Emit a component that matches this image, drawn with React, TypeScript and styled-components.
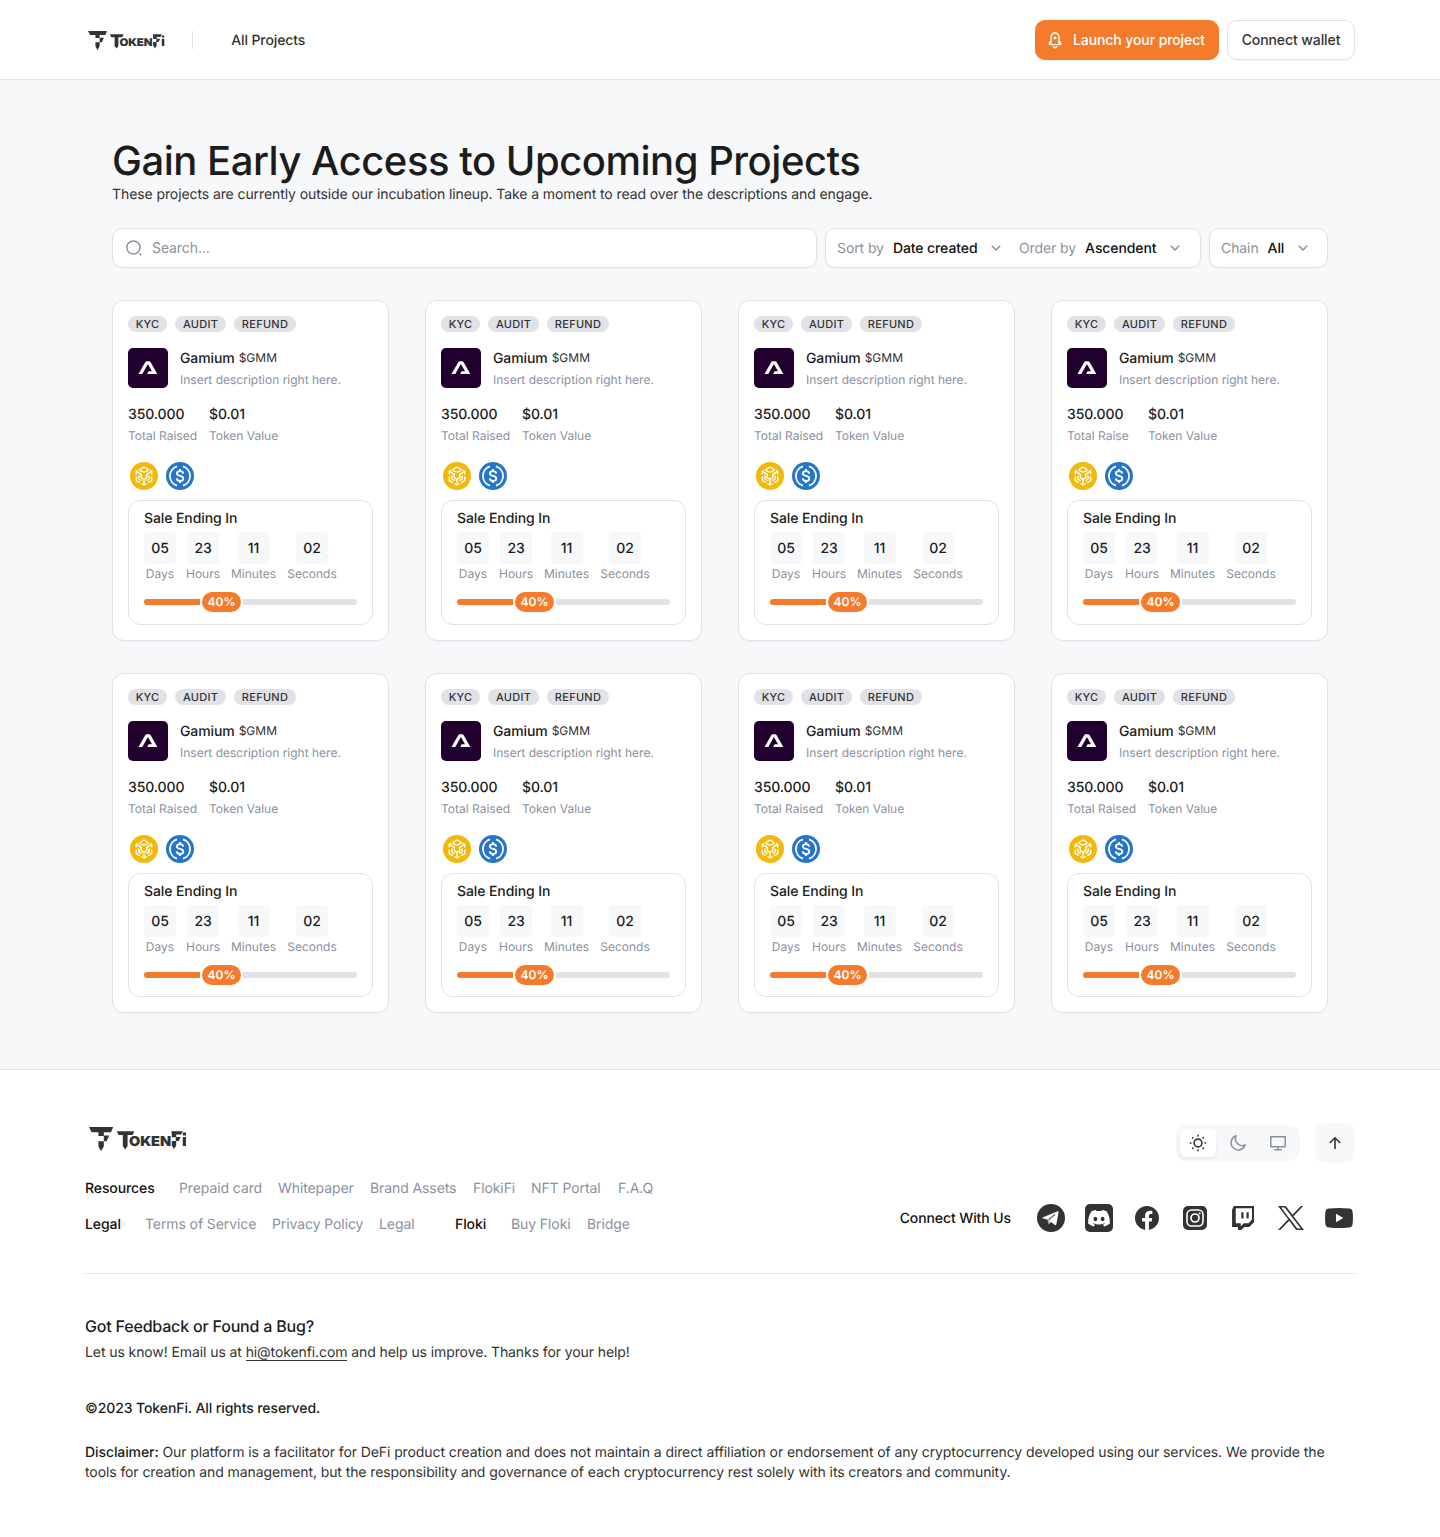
import React from "react";
import styled, { createGlobalStyle } from "styled-components";
import { FaDiscord } from "react-icons/fa6";

const GlobalStyle = createGlobalStyle`
  *, *::before, *::after { box-sizing: border-box; }
  body { margin: 0; background: #fff; text-rendering: geometricPrecision; }
  body, input, button { font-family: Inter, "Liberation Sans", sans-serif; }
`;

const c = {
  ink: "#1c1c1c",
  text: "#333333",
  muted: "#8b90a0",
  line: "#e1e2e8",
  surface: "#f7f8fa",
  orange: "#f47b2b",
};

const Page = styled.div`
  width: 1440px;
  min-height: 1537px;
  display: flex;
  flex-direction: column;
  font-size: 14px;
  line-height: 20px;
  letter-spacing: -0.094px;
  color: ${c.text};
`;

const Header = styled.header`
  height: 80px;
  padding: 0 85px;
  border-bottom: 1px solid ${c.line};
  display: flex;
  align-items: center;
  justify-content: space-between;
`;

const HeaderGroup = styled.div<{ $gap?: number }>`
  display: flex;
  align-items: center;
  gap: ${(p) => p.$gap ?? 0}px;
`;

const LogoBox = styled.div<{ $scale: number }>`
  display: flex;
  padding-left: ${(p) => (p.$scale < 1 ? 3 : 4)}px;
  padding-top: ${(p) => (p.$scale < 1 ? 1 : 0)}px;
  svg {
    width: ${(p) => 98 * p.$scale}px;
    height: ${(p) => 24 * p.$scale}px;
    overflow: visible;
  }
`;

const Separator = styled.span`
  width: 1px;
  height: 18px;
  margin: 0 38px 0 27px;
  background: ${c.line};
`;

const NavLink = styled.a`
  padding-top: 2px;
  font-weight: 500;
`;

const Button = styled.button<{ $primary?: boolean }>`
  height: 40px;
  width: ${(p) => (p.$primary ? 184 : 128)}px;
  padding: 0 0 0 ${(p) => (p.$primary ? 9 : 0)}px;
  display: flex;
  align-items: center;
  justify-content: ${(p) => (p.$primary ? "flex-start" : "center")};
  gap: 8px;
  border-radius: 10px;
  border: 1px solid ${(p) => (p.$primary ? c.orange : c.line)};
  background: ${(p) => (p.$primary ? c.orange : "#fff")};
  color: ${(p) => (p.$primary ? "#fff" : c.text)};
  font-size: 14px;
  font-weight: 500;
  letter-spacing: -0.094px;
  box-shadow: 0 1px 2px rgba(20, 20, 43, 0.04);
`;

const Main = styled.main`
  height: 990px;
  padding: 57px 112px 0;
  background: ${c.surface};
  border-bottom: 1px solid ${c.line};
`;

const Title = styled.h1`
  margin: 0;
  font-size: 40px;
  line-height: 47px;
  font-weight: 500;
  letter-spacing: -0.48px;
  color: ${c.ink};
`;

const Subtitle = styled.p`
  margin: 0;
  padding-top: 1px;
`;

const Toolbar = styled.div`
  display: flex;
  gap: 8px;
  margin: 23px 0 32px;
`;

const Field = styled.div<{ $width?: number }>`
  height: 40px;
  ${(p) => (p.$width ? `width: ${p.$width}px;` : "flex: 1;")}
  display: flex;
  align-items: center;
  padding: 0 11px;
  background: #fff;
  border: 1px solid ${c.line};
  border-radius: 10px;
  box-shadow: 0 1px 2px rgba(20, 20, 43, 0.03);
`;

const SearchInput = styled.input`
  flex: 1;
  height: 20px;
  line-height: 20px;
  border: 0;
  outline: 0;
  padding: 0 0 1px;
  margin-left: 8px;
  font-size: 14px;
  letter-spacing: -0.094px;
  background: transparent;
  &::placeholder { color: ${c.muted}; opacity: 1; }
`;

const Select = styled.div<{ $width?: number }>`
  display: flex;
  align-items: center;
  white-space: nowrap;
  ${(p) => (p.$width ? `width: ${p.$width}px;` : "")}
  span, b { padding-top: 2px; }
  span { color: ${c.muted}; margin-right: 9px; }
  b { color: #111; font-weight: 500; margin-right: 8.500px; }
`;

const Grid = styled.div`
  display: grid;
  grid-template-columns: repeat(4, 277px);
  column-gap: 36px;
  row-gap: 32px;
`;

const Card = styled.article`
  height: 340.6px;
  padding: 15px;
  background: #fff;
  border: 1px solid ${c.line};
  border-radius: 12px;
  box-shadow: 0 1px 2px rgba(20, 20, 43, 0.03);
`;

const Tags = styled.div`
  display: flex;
  gap: 8px;
`;

const Tag = styled.span<{ $width: number }>`
  width: ${(p) => p.$width}px;
  height: 16px;
  border-radius: 8px;
  background: ${c.line};
  font-size: 11px;
  line-height: 16px;
  font-weight: 500;
  letter-spacing: 0.280px;
  text-align: center;
`;

const Project = styled.div`
  display: flex;
  gap: 12px;
  height: 40px;
  margin: 16px 0;
`;

const ProjectLogo = styled.div`
  width: 40px;
  height: 40px;
  border-radius: 5px;
  background: #21002f;
  svg { display: block; }
`;

const ProjectName = styled.div`
  display: flex;
  gap: 4px;
  height: 20px;
  line-height: 22px;
  color: ${c.ink};
  font-weight: 500;
  small { font-size: 12px; line-height: 20px; font-weight: 400; color: ${c.text}; letter-spacing: 0; }
`;

const Small = styled.div`
  margin-top: 2px;
  font-size: 12px;
  line-height: 20px;
  letter-spacing: 0;
  color: ${c.muted};
  white-space: nowrap;
`;

const Stats = styled.div`
  display: flex;
  gap: 12px;
`;

const Stat = styled.div`
  width: 69px;
`;

const Value = styled.div`
  height: 20px;
  line-height: 22px;
  color: ${c.ink};
  font-weight: 500;
`;

const Coins = styled.div`
  display: flex;
  gap: 8px;
  height: 28px;
  margin: 16px 0 10px 2px;
`;

const Sale = styled.section`
  height: 124.6px;
  padding: 7px 15px;
  border: 1px solid ${c.line};
  border-radius: 12px;
`;

const Countdown = styled.div`
  display: grid;
  grid-template-columns: 32px 34px 47px 50px;
  column-gap: 10px;
  height: 52px;
  margin: 4px 0 8px;
`;

const Unit = styled.div`
  display: flex;
  flex-direction: column;
  align-items: center;
  div { margin-top: 0; }
`;

const Digits = styled.span`
  width: 32px;
  height: 32px;
  border-radius: 4px;
  background: ${c.surface};
  color: ${c.ink};
  font-weight: 500;
  line-height: 34px;
  text-align: center;
`;

const Progress = styled.div`
  height: 20px;
  display: flex;
  align-items: center;
`;

const Bar = styled.span<{ $done?: boolean }>`
  height: 6px;
  ${(p) => (p.$done ? "width: 56px;" : "flex: 1;")}
  background: ${(p) => (p.$done ? c.orange : c.line)};
  border-radius: ${(p) => (p.$done ? "3px 0 0 3px" : "0 3px 3px 0")};
`;

const Percent = styled.span`
  width: 39px;
  height: 20px;
  margin: 0 2px;
  border-radius: 10px;
  background: ${c.orange};
  color: #fff;
  font-size: 12px;
  font-weight: 600;
  letter-spacing: 0;
  text-align: center;
`;

const Footer = styled.footer`
  padding: 53px 85px 0;
`;

const FooterTop = styled.div`
  display: flex;
  justify-content: space-between;
  height: 151px;
  border-bottom: 1px solid ${c.line};
`;

const FooterLinks = styled.div`
  padding-top: 4px;
`;

const LinkRow = styled.div<{ $top: number }>`
  display: flex;
  margin-top: ${(p) => p.$top}px;
  white-space: nowrap;
`;

const FooterLink = styled.a<{ $width: number; $head?: boolean }>`
  width: ${(p) => p.$width}px;
  color: ${(p) => (p.$head ? "#111" : c.muted)};
  font-weight: ${(p) => (p.$head ? 500 : 400)};
`;

const FooterSide = styled.div`
  display: flex;
  flex-direction: column;
  align-items: flex-end;
`;

const Controls = styled.div`
  display: flex;
  align-items: center;
  gap: 15px;
`;

const ThemeSwitch = styled.div`
  display: flex;
  gap: 4px;
  padding: 4px;
  border-radius: 10px;
  background: ${c.surface};
`;

const ThemeOption = styled.button<{ $active?: boolean }>`
  width: 36px;
  height: 28px;
  padding: 0;
  border: 0;
  border-radius: 6px;
  display: grid;
  place-items: center;
  color: ${(p) => (p.$active ? c.text : c.muted)};
  background: ${(p) => (p.$active ? "#fff" : "transparent")};
  box-shadow: ${(p) => (p.$active ? "0 2px 4px rgba(20,20,43,.08)" : "none")};
`;

const TopButton = styled.button`
  width: 40px;
  height: 40px;
  padding: 0;
  border: 0;
  border-radius: 10px;
  display: grid;
  place-items: center;
  background: ${c.surface};
  color: ${c.text};
`;

const Social = styled.div`
  display: flex;
  align-items: center;
  margin-top: 39px;
  b { padding-top: 2px; color: #111; font-weight: 500; margin-right: 24px; }
`;

const SocialIcons = styled.div`
  display: flex;
  gap: 16px;
`;

const SocialLink = styled.a`
  width: 32px;
  height: 32px;
  display: grid;
  place-items: center;
`;

const Feedback = styled.h2`
  margin: 42px 0 7px;
  font-size: 16px;
  line-height: 20px;
  font-weight: 500;
  letter-spacing: -0.190px;
  color: ${c.ink};
`;

const Paragraph = styled.p<{ $top?: number }>`
  margin: ${(p) => p.$top ?? 0}px 0 0;
  b { font-weight: 500; color: ${c.ink}; }
`;

const MailLink = styled.a`
  background: linear-gradient(${c.text}, ${c.text}) 0 100% / 100% 1px no-repeat;
`;

const Logo = ({ scale = 1 }: { scale?: number }) => (
  <LogoBox $scale={scale}>
    <svg viewBox="0 0 98 24" fill="#333" aria-label="TokenFi">
      <path d="M0 0H24.200L22 5.200H14.800V8.600H20.200L17.600 14.200H14.800V19.400L12.100 24 9.400 19.400V14.200H14.800V9H9.400V5.200H2.600Z" />
      <path d="M27.800 4.200H45.200L43.600 8H38.600V19L36.200 22.400 33.800 19V8H29.600Z" />
      <text x="40" y="19" fontSize="13.600" fontWeight="900" fontFamily="Inter, sans-serif" textLength="42" lengthAdjust="spacingAndGlyphs">OKEN</text>
      <path d="M82.400 4.200H93.800L92.200 7.600H87.200V10H91.600L89.800 14H87.200V18.600L85 22 82.800 18.600V14H86.800V10.200H82.800V7.600Z" />
      <path d="M93.800 10H97V19H93.800ZM93.800 5.600H97V8.400H93.800Z" />
    </svg>
  </LogoBox>
);

const Rocket = () => (
  <svg width="20" height="20" viewBox="0 0 20 20" fill="none" stroke="#fff" strokeWidth="1.400" strokeLinejoin="round" strokeLinecap="round">
    <path d="M6 10.600V7.300C6 5 7.800 3.300 10 2.700 12.200 3.300 14 5 14 7.300V10.600L15.600 12.800V14.600H4.400V12.800L6 10.600V14.400M14 10.600V14.400" />
    <path d="M8.300 16.700 10 17.900 11.700 16.700" />
    <circle cx="10" cy="7.800" r="0.800" fill="#fff" />
  </svg>
);

const SearchIcon = () => (
  <svg width="20" height="20" viewBox="0 0 20 20" fill="none" stroke={c.muted} strokeWidth="1.500">
    <circle cx="9.400" cy="9.500" r="6.600" />
    <path d="M15.400 15.500 17.200 17.300" />
  </svg>
);

const Chevron = () => (
  <svg width="20" height="20" viewBox="0 0 20 20" fill="none" stroke={c.muted} strokeWidth="1.500">
    <path d="M5.800 7.800 10 12 14.200 7.800" />
  </svg>
);

const ProjectMark = () => (
  <svg width="40" height="40" viewBox="0 0 40 40" fill="#fff">
    <path d="M10.500 26 17.200 14.200Q17.700 13.200 18.800 13.200H21Q22.100 13.200 22.700 14.200L29.300 26H19.200L20.600 23.200H24L19.900 16.100 14.300 26Z" />
  </svg>
);

const BnbCoin = () => (
  <svg width="28" height="28" viewBox="0 0 28 28" fill="none">
    <circle cx="14" cy="14" r="14" fill="#f0b90b" />
    <g stroke="#fff" strokeWidth="1.400" strokeLinejoin="round">
      <path d="M9.600 7.500 14 5.200 18.400 7.500M6.300 12.600V9.400L8.200 8.300M21.700 12.600V9.400L19.800 8.300M6.300 14.400V18.600L9.800 20.600M21.700 14.400V18.600L18.200 20.600M11.300 21.500 14 23 16.700 21.500" />
      <path d="M6.300 9.400 11.300 12.400V15.700L14 17.300 16.700 15.700V12.400L21.700 9.400M9.600 7.700Q14 12.600 18.400 7.700M14 17.300V22.600M8.900 13.600V17L11.500 18.600M19.100 13.600V17L16.500 18.600" />
    </g>
  </svg>
);

const UsdcCoin = () => (
  <svg width="28" height="28" viewBox="0 0 28 28" fill="none">
    <circle cx="14" cy="14" r="14" fill="#2775ca" />
    <g stroke="#fff" strokeWidth="1.800">
      <path d="M11 4.300A10.200 10.200 0 0 0 11 23.700M17 4.300A10.200 10.200 0 0 1 17 23.700" />
      <path d="M17.200 11.600C17 9.900 15.900 9.100 14 9.100S10.900 10 10.900 11.500C10.900 15.100 17.300 12.700 17.300 16.400 17.300 18 16 18.900 14 18.900S10.900 18 10.700 16.300M14 7V9.300M14 18.700V21" />
    </g>
  </svg>
);

const SunIcon = () => (
  <svg width="20" height="20" viewBox="0 0 20 20" fill="none" stroke="currentColor" strokeWidth="1.600">
    <circle cx="10" cy="10" r="3.900" />
    <path d="M10 1.800V3.500M10 16.500V18.200M1.800 10H3.500M16.500 10H18.200M4.200 4.200 5.400 5.400M14.600 14.600 15.800 15.800M15.800 4.200 14.600 5.400M5.400 14.600 4.200 15.800" />
  </svg>
);

const MoonIcon = () => (
  <svg width="20" height="20" viewBox="0 0 20 20" fill="none" stroke="currentColor" strokeWidth="1.500" strokeLinejoin="round">
    <path d="M8.200 2.800A7.200 7.200 0 1 0 17.200 11.800 6.700 6.700 0 0 1 8.200 2.800Z" />
  </svg>
);

const MonitorIcon = () => (
  <svg width="20" height="20" viewBox="0 0 20 20" fill="none" stroke="currentColor" strokeWidth="1.500" strokeLinejoin="round">
    <path d="M2.800 3.700H17.200V13.700H2.800ZM10 13.700V16.700M6.200 16.800H13.800" />
  </svg>
);

const ArrowUp = () => (
  <svg width="20" height="20" viewBox="0 0 20 20" fill="none" stroke="currentColor" strokeWidth="1.600">
    <path d="M10 16V4.800M4.800 10 10 4.800 15.200 10" />
  </svg>
);

const TelegramIcon = () => (
  <svg width="28" height="28" viewBox="0 0 28 28">
    <circle cx="14" cy="14" r="14" fill="#333" />
    <path fill="#fff" d="M5.600 13.400 20.600 7.200Q21.800 6.900 21.600 8.200L19.300 20.400Q19 21.600 17.900 20.900L14 18.100 12 20Q11.400 20.400 11.300 19.600L10.600 15.700 5.700 14.300Q4.900 13.900 5.600 13.400Z" />
    <path stroke="#333" strokeWidth="0.700" d="M10.600 15.700 18.200 10.300 12 16.300 11.700 19.800" fill="none" />
  </svg>
);

const DiscordIcon = () => (
  <svg width="28" height="28" viewBox="0 0 28 28">
    <rect width="28" height="28" rx="5" fill="#333" />
    <FaDiscord x="2.200" y="2.400" size={23.600} color="#fff" />
  </svg>
);

const FacebookIcon = () => (
  <svg width="24" height="24" viewBox="0 0 24 24" fill="#333">
    <path d="M24 12.073c0-6.627-5.373-12-12-12s-12 5.373-12 12c0 5.990 4.388 10.954 10.125 11.854v-8.385H7.078v-3.470h3.047V9.430c0-3.007 1.792-4.669 4.533-4.669 1.312 0 2.686.235 2.686.235v2.953H15.830c-1.491 0-1.956.925-1.956 1.874v2.250h3.328l-.532 3.470h-2.796v8.385C19.612 23.027 24 18.062 24 12.073z" />
  </svg>
);

const InstagramIcon = () => (
  <svg width="24" height="24" viewBox="0 0 24 24" fill="none">
    <rect width="24" height="24" rx="5" fill="#333" />
    <rect x="4" y="4" width="16" height="16" rx="4.500" stroke="#fff" strokeWidth="1.600" />
    <circle cx="12" cy="12" r="4" stroke="#fff" strokeWidth="1.700" />
    <circle cx="16.600" cy="7.400" r="1" fill="#fff" />
  </svg>
);

const TwitchIcon = () => (
  <svg width="22" height="24" viewBox="0.500 0 21.400 24" preserveAspectRatio="none" fill="#333">
    <path d="M2.149 0l-1.612 4.119v16.836h5.731v3.045h3.224l3.045-3.045h4.657l4.700-4.700v-16.255zm17.800 13.612l-3.300 3.582h-4.600l-3.045 3.045v-3.045h-4.836v-15.045h15.781zm-3.200-7.343v6.262h-2.149v-6.262zm-5.100 0v6.262h-2.149v-6.262z" />
  </svg>
);

const XIcon = () => (
  <svg width="26" height="24" viewBox="0 0 1200 1227" preserveAspectRatio="none" fill="#333">
    <path d="M714.163 519.284L1160.890 0H1055.030L667.137 450.887L357.328 0H0L468.492 681.821L0 1226.370H105.866L515.491 750.218L842.672 1226.370H1200L714.137 519.284H714.163ZM569.165 687.828L521.697 619.934L144.011 79.694H306.615L611.412 515.685L658.880 583.579L1055.080 1150.300H892.476L569.165 687.854V687.828Z" />
  </svg>
);

const YoutubeIcon = () => (
  <svg width="28" height="20" viewBox="0 0 28 20">
    <path fill="#333" d="M4 .5Q14-.5 24 .5 27.300.8 27.600 4 28.300 10 27.600 16 27.300 19.200 24 19.500 14 20.500 4 19.500.7 19.200.4 16-.3 10 .4 4 .7.8 4 .5Z" />
    <path fill="#fff" d="M11 5.800 18.300 10 11 14.200Z" />
  </svg>
);

const projects = Array.from({ length: 8 }, (_, i) => ({
  id: i,
  raisedLabel: i === 3 ? "Total Raise" : "Total Raised",
}));

const tags: [string, number][] = [["KYC", 39], ["AUDIT", 51], ["REFUND", 62]];
const units = [["05", "Days"], ["23", "Hours"], ["11", "Minutes"], ["02", "Seconds"]];

const ProjectCard = ({ raisedLabel }: { raisedLabel: string }) => (
  <Card>
    <Tags>{tags.map(([t, w]) => <Tag key={t} $width={w}>{t}</Tag>)}</Tags>
    <Project>
      <ProjectLogo><ProjectMark /></ProjectLogo>
      <div>
        <ProjectName>Gamium <small>$GMM</small></ProjectName>
        <Small>Insert description right here.</Small>
      </div>
    </Project>
    <Stats>
      <Stat><Value>350.000</Value><Small>{raisedLabel}</Small></Stat>
      <Stat><Value>$0.01</Value><Small>Token Value</Small></Stat>
    </Stats>
    <Coins><BnbCoin /><UsdcCoin /></Coins>
    <Sale>
      <Value>Sale Ending In</Value>
      <Countdown>
        {units.map(([n, l]) => <Unit key={l}><Digits>{n}</Digits><Small>{l}</Small></Unit>)}
      </Countdown>
      <Progress><Bar $done /><Percent>40%</Percent><Bar /></Progress>
    </Sale>
  </Card>
);

export default function App() {
  return (
    <Page>
      <GlobalStyle />
      <Header>
        <HeaderGroup>
          <Logo scale={0.787} />
          <Separator />
          <NavLink>All Projects</NavLink>
        </HeaderGroup>
        <HeaderGroup $gap={8}>
          <Button $primary><Rocket />Launch your project</Button>
          <Button>Connect wallet</Button>
        </HeaderGroup>
      </Header>
      <Main>
        <Title>Gain Early Access to Upcoming Projects</Title>
        <Subtitle>These projects are currently outside our incubation lineup. Take a moment to read over the descriptions and engage.</Subtitle>
        <Toolbar>
          <Field><SearchIcon /><SearchInput placeholder="Search..." /></Field>
          <Field $width={376}>
            <Select $width={182}><span>Sort by</span><b>Date created</b><Chevron /></Select>
            <Select><span>Order by</span><b>Ascendent</b><Chevron /></Select>
          </Field>
          <Field $width={119}>
            <Select><span>Chain</span><b>All</b><Chevron /></Select>
          </Field>
        </Toolbar>
        <Grid>{projects.map((p) => <ProjectCard key={p.id} raisedLabel={p.raisedLabel} />)}</Grid>
      </Main>
      <Footer>
        <FooterTop>
          <FooterLinks>
            <Logo />
            <LinkRow $top={28}>
              <FooterLink $head $width={94}>Resources</FooterLink>
              <FooterLink $width={99}>Prepaid card</FooterLink>
              <FooterLink $width={92}>Whitepaper</FooterLink>
              <FooterLink $width={103}>Brand Assets</FooterLink>
              <FooterLink $width={58}>FlokiFi</FooterLink>
              <FooterLink $width={87}>NFT Portal</FooterLink>
              <FooterLink $width={40}>F.A.Q</FooterLink>
            </LinkRow>
            <LinkRow $top={16}>
              <FooterLink $head $width={60}>Legal</FooterLink>
              <FooterLink $width={127}>Terms of Service</FooterLink>
              <FooterLink $width={107}>Privacy Policy</FooterLink>
              <FooterLink $width={76}>Legal</FooterLink>
              <FooterLink $head $width={56}>Floki</FooterLink>
              <FooterLink $width={76}>Buy Floki</FooterLink>
              <FooterLink $width={50}>Bridge</FooterLink>
            </LinkRow>
          </FooterLinks>
          <FooterSide>
            <Controls>
              <ThemeSwitch>
                <ThemeOption $active><SunIcon /></ThemeOption>
                <ThemeOption><MoonIcon /></ThemeOption>
                <ThemeOption><MonitorIcon /></ThemeOption>
              </ThemeSwitch>
              <TopButton><ArrowUp /></TopButton>
            </Controls>
            <Social>
              <b>Connect With Us</b>
              <SocialIcons>
                <SocialLink><TelegramIcon /></SocialLink>
                <SocialLink><DiscordIcon /></SocialLink>
                <SocialLink><FacebookIcon /></SocialLink>
                <SocialLink><InstagramIcon /></SocialLink>
                <SocialLink><TwitchIcon /></SocialLink>
                <SocialLink><XIcon /></SocialLink>
                <SocialLink><YoutubeIcon /></SocialLink>
              </SocialIcons>
            </Social>
          </FooterSide>
        </FooterTop>
        <Feedback>Got Feedback or Found a Bug?</Feedback>
        <Paragraph>Let us know! Email us at <MailLink>hi@tokenfi.com</MailLink> and help us improve. Thanks for your help!</Paragraph>
        <Paragraph $top={36}><b>©2023 TokenFi. All rights reserved.</b></Paragraph>
        <Paragraph $top={24}><b>Disclaimer:</b> Our platform is a facilitator for DeFi product creation and does not maintain a direct affiliation or endorsement of any cryptocurrency developed using our services. We provide the tools for creation and management, but the responsibility and governance of each cryptocurrency rest solely with its creators and community.</Paragraph>
      </Footer>
    </Page>
  );
}
